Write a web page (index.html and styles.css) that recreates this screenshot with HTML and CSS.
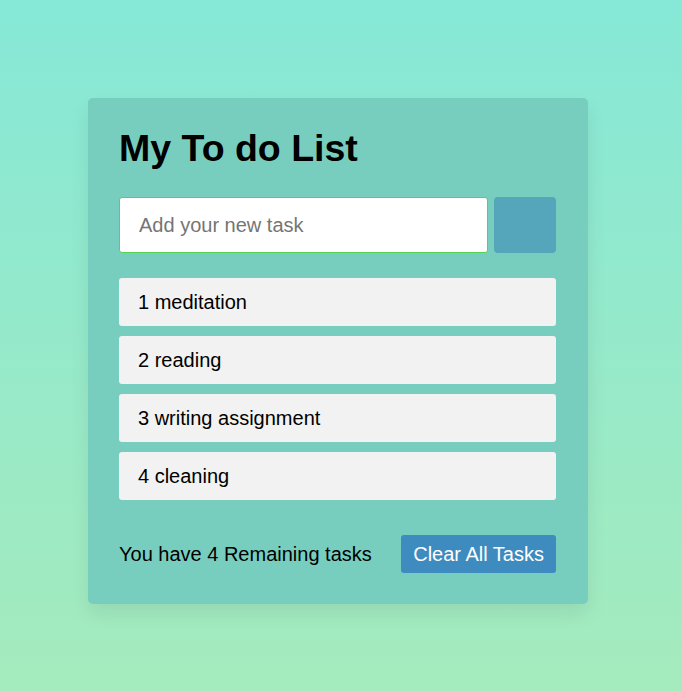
FILE: index.html
```html
<!DOCTYPE html>
<html>
<head>
<meta charset="utf-8">
<link rel="stylesheet" href="styles.css">
</head>
<body>
<div class="card">
  <h1 class="title">My To do List</h1>
  <div class="add-row">
    <input class="task-input" type="text" placeholder="Add your new task">
    <button class="add-btn" aria-label="Add"></button>
  </div>
  <ul class="tasks">
    <li class="task">1 meditation</li>
    <li class="task">2 reading</li>
    <li class="task">3 writing assignment</li>
    <li class="task">4 cleaning</li>
  </ul>
  <div class="footer">
    <span class="remaining">You have 4 Remaining tasks</span>
    <button class="clear-btn">Clear All Tasks</button>
  </div>
</div>
</body>
</html>
```

FILE: styles.css
```css
html, body {
  margin: 0;
  height: 100%;
}
body {
  background: linear-gradient(to bottom, #86e8d7, #a5ebbd);
  font-family: "Liberation Sans", Arial, sans-serif;
  padding-top: 98px;
  box-sizing: border-box;
}
.card {
  width: 500px;
  box-sizing: border-box;
  margin-left: 88px;
  background: #78cebe;
  border-radius: 5px;
  padding: 29px 32px 31px 31px;
  box-shadow: 0 10px 20px rgba(0, 0, 0, 0.08);
}
.title {
  margin: 0 0 28px 0;
  font-size: 37.5px;
  font-weight: bold;
  color: #000;
  line-height: 42px;
}
.add-row {
  display: flex;
  gap: 6px;
  height: 56px;
}
.task-input {
  flex: 1;
  box-sizing: border-box;
  height: 56px;
  border: 1px solid #56d356;
  border-radius: 3px;
  padding: 0 19px;
  font-family: "Liberation Sans", Arial, sans-serif;
  font-size: 20px;
  color: #000;
  background: #fff;
  outline: none;
}
.task-input::placeholder {
  color: #757575;
}
.add-btn {
  width: 62px;
  height: 56px;
  border: none;
  border-radius: 4px;
  background: #55a5bb;
  padding: 0;
}
.tasks {
  list-style: none;
  margin: 25px 0 0 0;
  padding: 0;
  display: flex;
  flex-direction: column;
  gap: 10px;
}
.task {
  height: 48px;
  line-height: 48px;
  background: #f2f2f2;
  border-radius: 3px;
  padding: 0 19px;
  font-size: 20px;
  color: #000;
}
.footer {
  margin-top: 35px;
  display: flex;
  justify-content: space-between;
  align-items: center;
}
.remaining {
  font-size: 20px;
  color: #000;
}
.clear-btn {
  height: 38px;
  border: none;
  border-radius: 3px;
  background: #3e8bbf;
  color: #fff;
  font-family: "Liberation Sans", Arial, sans-serif;
  font-size: 20px;
  padding: 0 12px;
}
```
